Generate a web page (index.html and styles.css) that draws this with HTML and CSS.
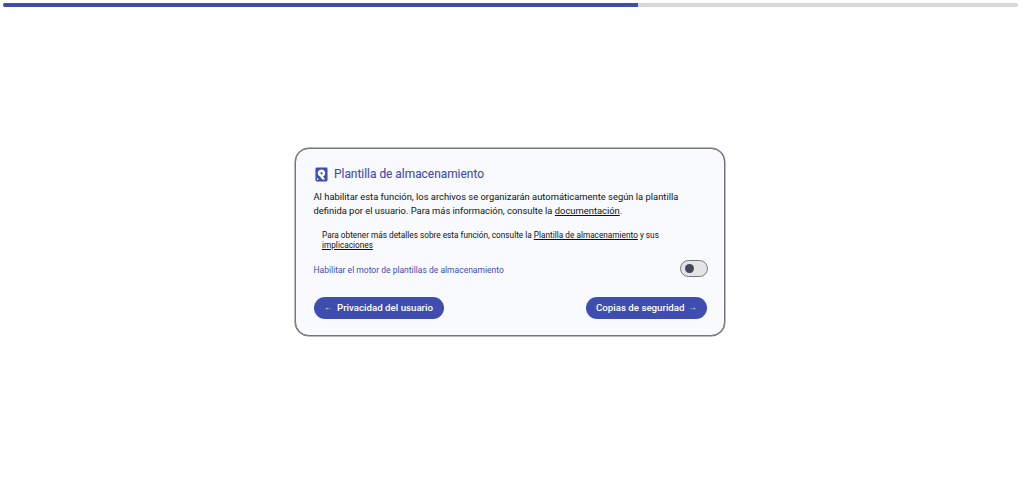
FILE: index.html
```html
<!DOCTYPE html>
<html lang="es">
<head>
  <meta charset="UTF-8" />
  <title>Plantilla de almacenamiento</title>
  <link rel="stylesheet" href="styles.css">
</head>
<body>

<div class="progress">
  <div class="progress-fill"></div>
</div>

<div class="page">
  <div class="card">
    <h2 class="card-title">
      <svg class="title-icon" viewBox="0 0 14 16" width="13" height="15" aria-hidden="true">
        <path fill="#3f4db0" fill-rule="evenodd" d="M2 .5h10A1.500 1.500 0 0 1 13.500 2v12a1.500 1.500 0 0 1-1.500 1.500H2A1.500 1.500 0 0 1 .5 14V2A1.500 1.500 0 0 1 2 .5ZM7 2.500a4 4 0 0 0-1.600 7.670L7.800 13.500H11L8.700 10.100A4 4 0 0 0 7 2.500Zm0 3a1.200 1.200 0 1 1 0 2.400 1.200 1.200 0 0 1 0-2.400Z"/>
        <path fill="#f8fafd" d="M2 12.200h1.600v1.600H2Z"/>
      </svg>
      Plantilla de almacenamiento
    </h2>
    <p class="description">
      Al habilitar esta función, los archivos se organizarán automáticamente según la plantilla
      definida por el usuario. Para más información, consulte la <a href="#">documentación</a>.
    </p>
    <p class="note">
      Para obtener más detalles sobre esta función, consulte la <a href="#">Plantilla de almacenamiento</a> y sus
      <a href="#">implicaciones</a>
    </p>
    <div class="toggle-row">
      <span class="toggle-label">Habilitar el motor de plantillas de almacenamiento</span>
      <span class="toggle"><span class="toggle-knob"></span></span>
    </div>
    <div class="nav-row">
      <a class="button" href="#"><span class="arrow arrow-back">←</span> Privacidad del usuario</a>
      <a class="button" href="#">Copias de seguridad <span class="arrow">→</span></a>
    </div>
  </div>
</div>

</body>
</html>
```

FILE: styles.css
```css
* {
  box-sizing: border-box;
}
body {
  margin: 0;
  height: 482px;
  overflow: hidden;
  background: #fff;
  color: #111;
  font-family: Roboto, "Liberation Sans", sans-serif;
}
a {
  color: #111;
}
.progress {
  height: 4px;
  margin: 3px 6px 0 3px;
  background: #d6d8d9;
  border-radius: 2px;
  overflow: hidden;
}
.progress-fill {
  width: 62.6%;
  height: 100%;
  background: #3f4db0;
}
.page {
  display: flex;
  justify-content: center;
  padding: 141px 7px 0 3px;
}
.card {
  width: 430px;
  height: 188px;
  padding: 16px 16px 0 17.500px;
  background: #f8fafd;
  border: 1px solid #74777a;
  border-radius: 14px;
  box-shadow: 0 0 0 0.500px #74777a;
}
.card-title {
  display: flex;
  align-items: center;
  gap: 6px;
  margin: 0 0 7px 1.500px;
  color: #3f4db0;
  font-size: 11.900px;
  font-weight: 400;
  line-height: 18px;
  -webkit-text-stroke: 0.100px #3f4db0;
}
.title-icon {
  flex: none;
}
.description {
  margin: 0 0 12.500px;
  font-size: 9.400px;
  line-height: 13.500px;
}
.note {
  margin: 0 0 9px 8.500px;
  font-size: 8.260px;
  line-height: 10.500px;
}
.toggle-row {
  display: flex;
  justify-content: space-between;
  align-items: center;
  margin-bottom: 20.500px;
}
.toggle-label {
  padding-top: 4px;
  color: #3f4db0;
  font-size: 8.530px;
}
.toggle {
  display: flex;
  align-items: center;
  width: 28px;
  height: 17px;
  padding-left: 4px;
  background: #e3e4e5;
  border: 1px solid #74777a;
  border-radius: 9px;
}
.toggle-knob {
  width: 9px;
  height: 9px;
  background: #44495a;
  border-radius: 50%;
}
.nav-row {
  display: flex;
  justify-content: space-between;
  padding-right: 1px;
}
.button {
  display: inline-flex;
  align-items: center;
  gap: 4px;
  height: 22px;
  padding: 0 10.500px 1px;
  background: #3f4db0;
  color: #fff;
  border-radius: 11px;
  font-size: 9.700px;
  font-weight: 500;
  text-decoration: none;
}
.arrow {
  font-size: 8px;
}
.arrow-back {
  margin-right: 1px;
}
```
